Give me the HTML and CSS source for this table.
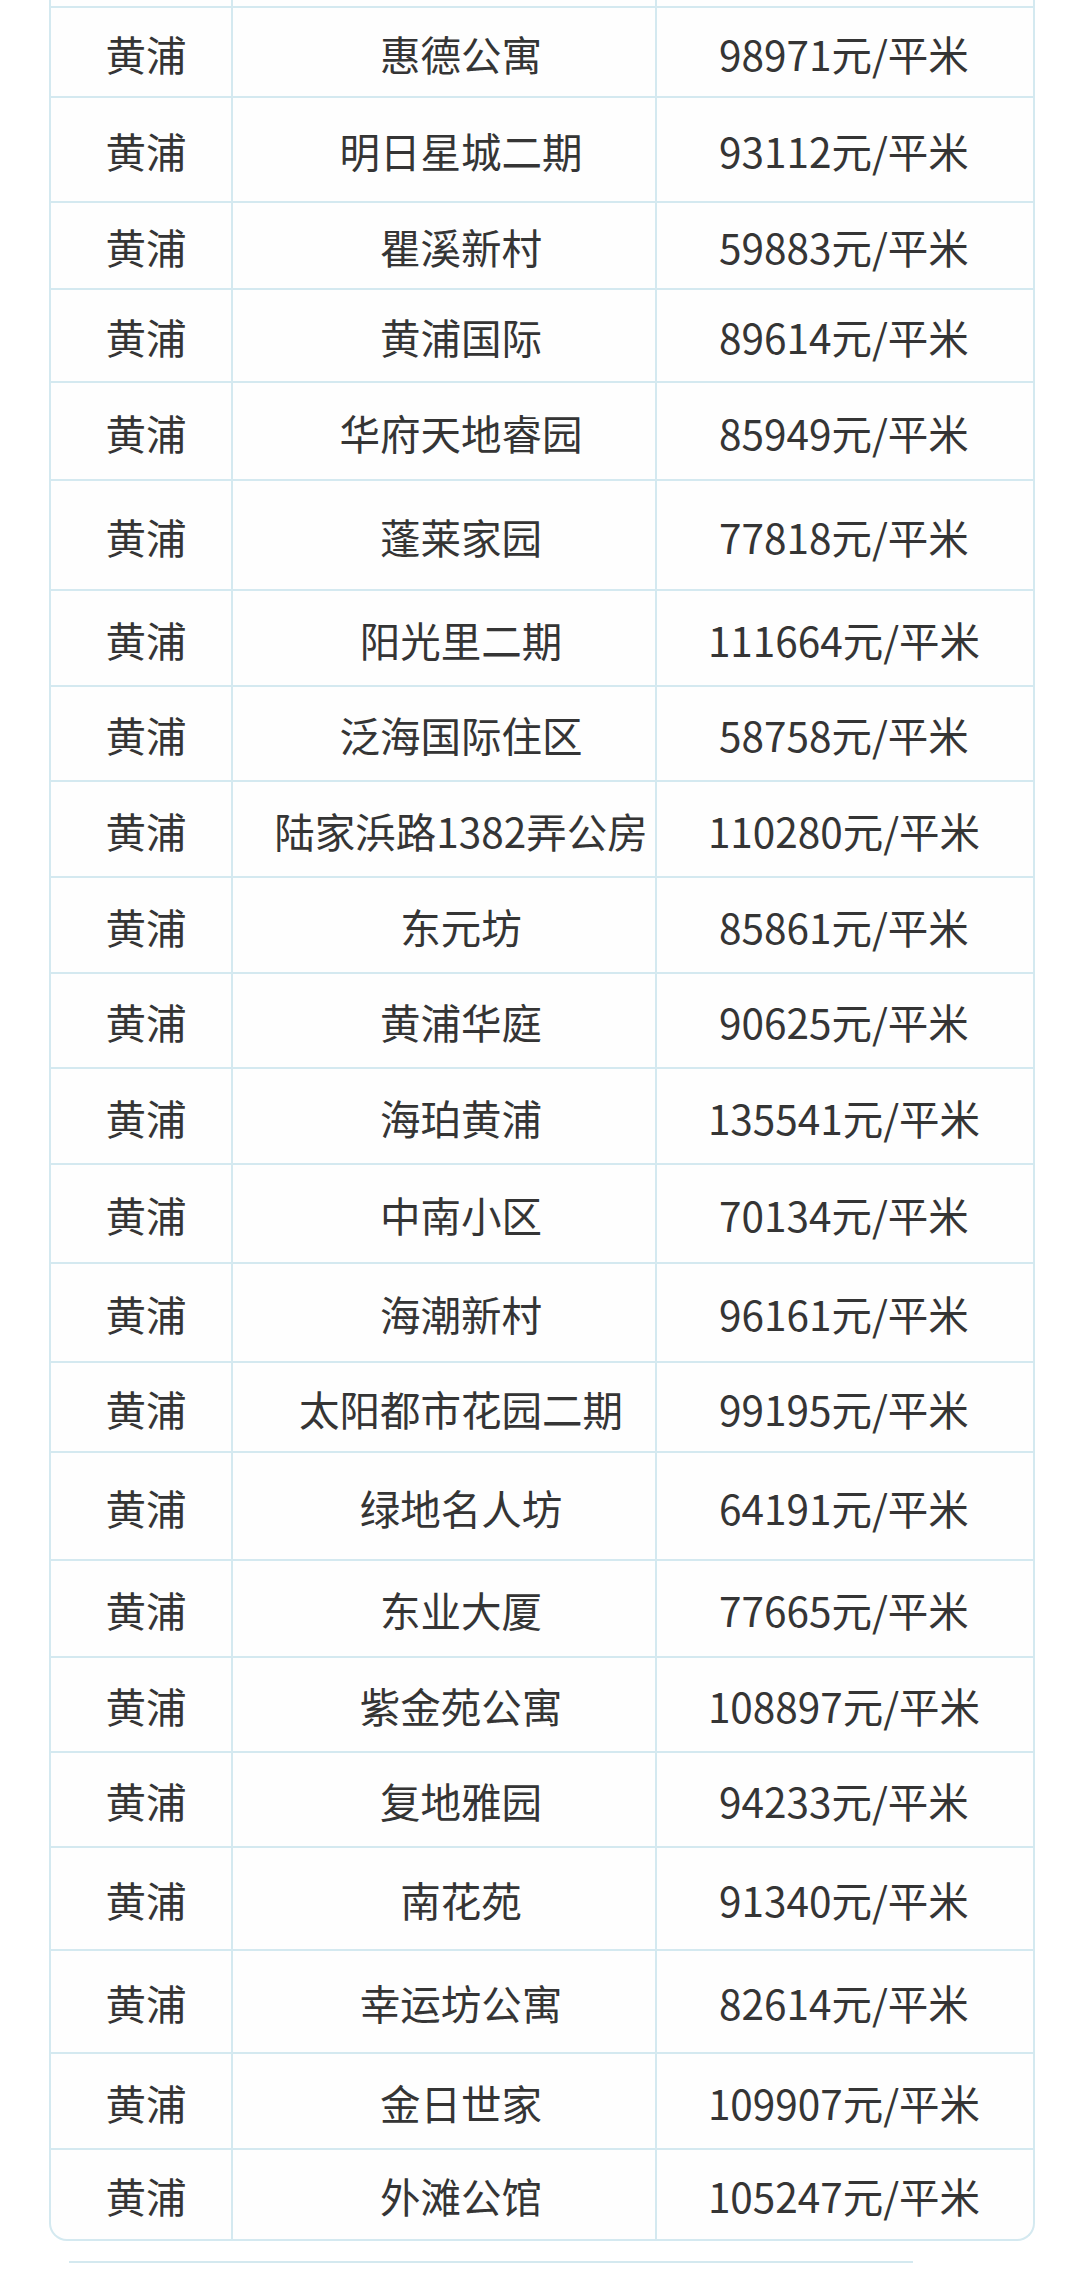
FILE: index.html
```html
<!DOCTYPE html>
<html lang="zh-CN">
<head>
<meta charset="utf-8">
<title>黄浦小区均价</title>
<link rel="stylesheet" href="styles.css">
</head>
<body>
<div class="page">
  <div class="table">
    <div class="row row-cut"><div class="cell c1"></div><div class="cell c2"></div><div class="cell c3"></div></div>
    <div class="row"><div class="cell c1">黄浦</div><div class="cell c2">惠德公寓</div><div class="cell c3">98971元/平米</div></div>
    <div class="row"><div class="cell c1">黄浦</div><div class="cell c2">明日星城二期</div><div class="cell c3">93112元/平米</div></div>
    <div class="row"><div class="cell c1">黄浦</div><div class="cell c2">瞿溪新村</div><div class="cell c3">59883元/平米</div></div>
    <div class="row"><div class="cell c1">黄浦</div><div class="cell c2">黄浦国际</div><div class="cell c3">89614元/平米</div></div>
    <div class="row"><div class="cell c1">黄浦</div><div class="cell c2">华府天地睿园</div><div class="cell c3">85949元/平米</div></div>
    <div class="row"><div class="cell c1">黄浦</div><div class="cell c2">蓬莱家园</div><div class="cell c3">77818元/平米</div></div>
    <div class="row"><div class="cell c1">黄浦</div><div class="cell c2">阳光里二期</div><div class="cell c3">111664元/平米</div></div>
    <div class="row"><div class="cell c1">黄浦</div><div class="cell c2">泛海国际住区</div><div class="cell c3">58758元/平米</div></div>
    <div class="row"><div class="cell c1">黄浦</div><div class="cell c2">陆家浜路1382弄公房</div><div class="cell c3">110280元/平米</div></div>
    <div class="row"><div class="cell c1">黄浦</div><div class="cell c2">东元坊</div><div class="cell c3">85861元/平米</div></div>
    <div class="row"><div class="cell c1">黄浦</div><div class="cell c2">黄浦华庭</div><div class="cell c3">90625元/平米</div></div>
    <div class="row"><div class="cell c1">黄浦</div><div class="cell c2">海珀黄浦</div><div class="cell c3">135541元/平米</div></div>
    <div class="row"><div class="cell c1">黄浦</div><div class="cell c2">中南小区</div><div class="cell c3">70134元/平米</div></div>
    <div class="row"><div class="cell c1">黄浦</div><div class="cell c2">海潮新村</div><div class="cell c3">96161元/平米</div></div>
    <div class="row"><div class="cell c1">黄浦</div><div class="cell c2">太阳都市花园二期</div><div class="cell c3">99195元/平米</div></div>
    <div class="row"><div class="cell c1">黄浦</div><div class="cell c2">绿地名人坊</div><div class="cell c3">64191元/平米</div></div>
    <div class="row"><div class="cell c1">黄浦</div><div class="cell c2">东业大厦</div><div class="cell c3">77665元/平米</div></div>
    <div class="row"><div class="cell c1">黄浦</div><div class="cell c2">紫金苑公寓</div><div class="cell c3">108897元/平米</div></div>
    <div class="row"><div class="cell c1">黄浦</div><div class="cell c2">复地雅园</div><div class="cell c3">94233元/平米</div></div>
    <div class="row"><div class="cell c1">黄浦</div><div class="cell c2">南花苑</div><div class="cell c3">91340元/平米</div></div>
    <div class="row"><div class="cell c1">黄浦</div><div class="cell c2">幸运坊公寓</div><div class="cell c3">82614元/平米</div></div>
    <div class="row"><div class="cell c1">黄浦</div><div class="cell c2">金日世家</div><div class="cell c3">109907元/平米</div></div>
    <div class="row"><div class="cell c1">黄浦</div><div class="cell c2">外滩公馆</div><div class="cell c3">105247元/平米</div></div>
  </div>
  <div class="rule"></div>
</div>
</body>
</html>
```
FILE: styles.css
```css
html, body {
  margin: 0;
  padding: 0;
  background: #ffffff;
}

body {
  font-family: "Noto Sans CJK SC", "Noto Sans", sans-serif;
  color: #353535;
}

.page {
  width: 1080px;
  padding-left: 49px;
  box-sizing: border-box;
}

.table {
  width: 982px;
  border: 2px solid #d4e9f0;
  border-top: none;
  border-radius: 0 0 18px 18px;
  overflow: hidden;
  background: #fefefe;
}

.row {
  display: grid;
  grid-template-columns: 182px 424px 372px;
  border-bottom: 2px solid #d4e9f0;
  box-sizing: border-box;
  height: 96px;
}

.row:last-child {
  border-bottom: none;
}

.cell {
  display: flex;
  align-items: center;
  justify-content: center;
  font-size: 40.5px;
  line-height: 1;
  white-space: nowrap;
  padding-top: 4px;
  box-sizing: border-box;
}

.c1, .c2 {
  border-right: 2px solid #d4e9f0;
}

.c1 {
  padding-left: 10px;
}

.c2 {
  padding-left: 34px;
}

.c3 {
  padding-left: 2px;
}

.row-cut { height: 8px; }
.row:nth-child(2)  { height: 90px; }
.row:nth-child(3)  { height: 105px; }
.row:nth-child(4)  { height: 87px; }
.row:nth-child(5)  { height: 93px; }
.row:nth-child(6)  { height: 98px; }
.row:nth-child(7)  { height: 110px; }
.row:nth-child(8)  { height: 96px; }
.row:nth-child(9)  { height: 95px; }
.row:nth-child(10) { height: 96px; }
.row:nth-child(11) { height: 96px; }
.row:nth-child(12) { height: 95px; }
.row:nth-child(13) { height: 96px; }
.row:nth-child(14) { height: 99px; }
.row:nth-child(15) { height: 99px; }
.row:nth-child(16) { height: 90px; }
.row:nth-child(17) { height: 108px; }
.row:nth-child(18) { height: 97px; }
.row:nth-child(19) { height: 95px; }
.row:nth-child(20) { height: 95px; }
.row:nth-child(21) { height: 103px; }
.row:nth-child(22) { height: 103px; }
.row:nth-child(23) { height: 96px; }
.row:nth-child(24) { height: 89px; }

.rule {
  width: 844px;
  height: 2px;
  margin-left: 20px;
  margin-top: 20px;
  background: #d4e9f0;
}
```
